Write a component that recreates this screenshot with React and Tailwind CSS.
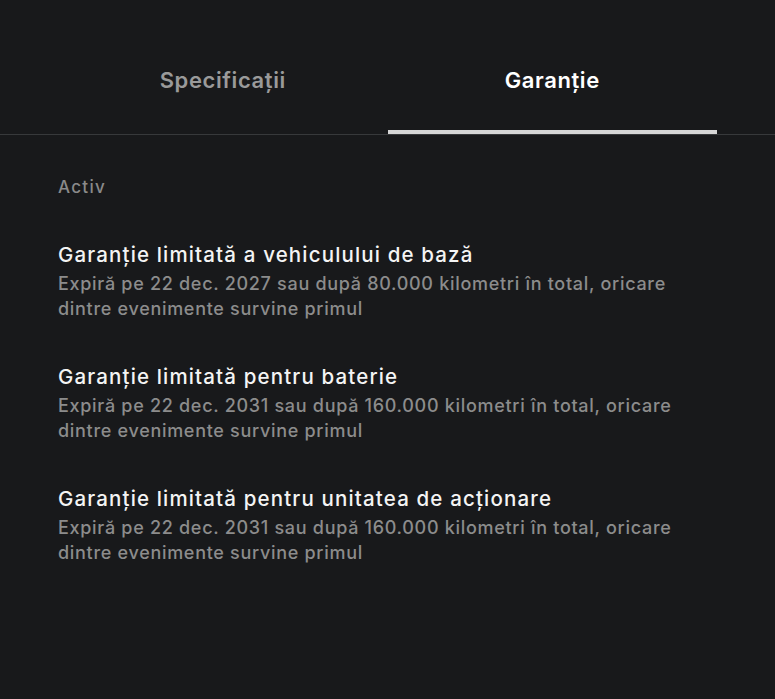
import React, { useState } from "react";

const warranties = [
  {
    title: "Garanție limitată a vehiculului de bază",
    desc: "Expiră pe 22 dec. 2027 sau după 80.000 kilometri în total, oricare dintre evenimente survine primul",
  },
  {
    title: "Garanție limitată pentru baterie",
    desc: "Expiră pe 22 dec. 2031 sau după 160.000 kilometri în total, oricare dintre evenimente survine primul",
  },
  {
    title: "Garanție limitată pentru unitatea de acționare",
    desc: "Expiră pe 22 dec. 2031 sau după 160.000 kilometri în total, oricare dintre evenimente survine primul",
  },
];

const App = () => {
  const [tab, setTab] = useState("garantie");

  const tabs = [
    { id: "spec", label: "Specificații" },
    { id: "garantie", label: "Garanție" },
  ];

  return (
    <div className="min-h-screen w-full bg-[#18191b] font-['Inter',sans-serif] antialiased">
      {/* Tabs */}
      <div className="border-b border-[#37393b] px-[58px]">
        <div className="flex">
          {tabs.map((t) => (
            <button
              key={t.id}
              onClick={() => setTab(t.id)}
              className="flex flex-1 flex-col items-center h-[134px] pt-[66px] cursor-pointer"
            >
              <span
                className={
                  "text-[22px] leading-[28px] font-semibold tracking-[0.6px] " +
                  (tab === t.id ? "text-white" : "text-[#9a9a9a]")
                }
              >
                {t.label}
              </span>
              <div className="flex-1"></div>
              <div className={"h-1 w-full " + (tab === t.id ? "bg-[#d6d6d6]" : "bg-transparent")}></div>
            </button>
          ))}
        </div>
      </div>

      {/* Content */}
      <div className="px-[58px] pt-[40px]">
        <div className="text-[17px] leading-[24px] font-medium tracking-[1.3px] text-[#8a8a8a]">Activ</div>
        <div className="flex flex-col gap-[42px] mt-[42px]">
          {warranties.map((w) => (
            <div key={w.title}>
              <div className="text-[20.5px] leading-[28px] font-medium tracking-[1.15px] text-[#f4f4f4]">{w.title}</div>
              <div className="mt-[2px] text-[18px] leading-[25px] font-medium tracking-[0.7px] text-[#8c8c8c] max-w-[640px]">
                {w.desc}
              </div>
            </div>
          ))}
        </div>
      </div>
    </div>
  );
};

export default App;
